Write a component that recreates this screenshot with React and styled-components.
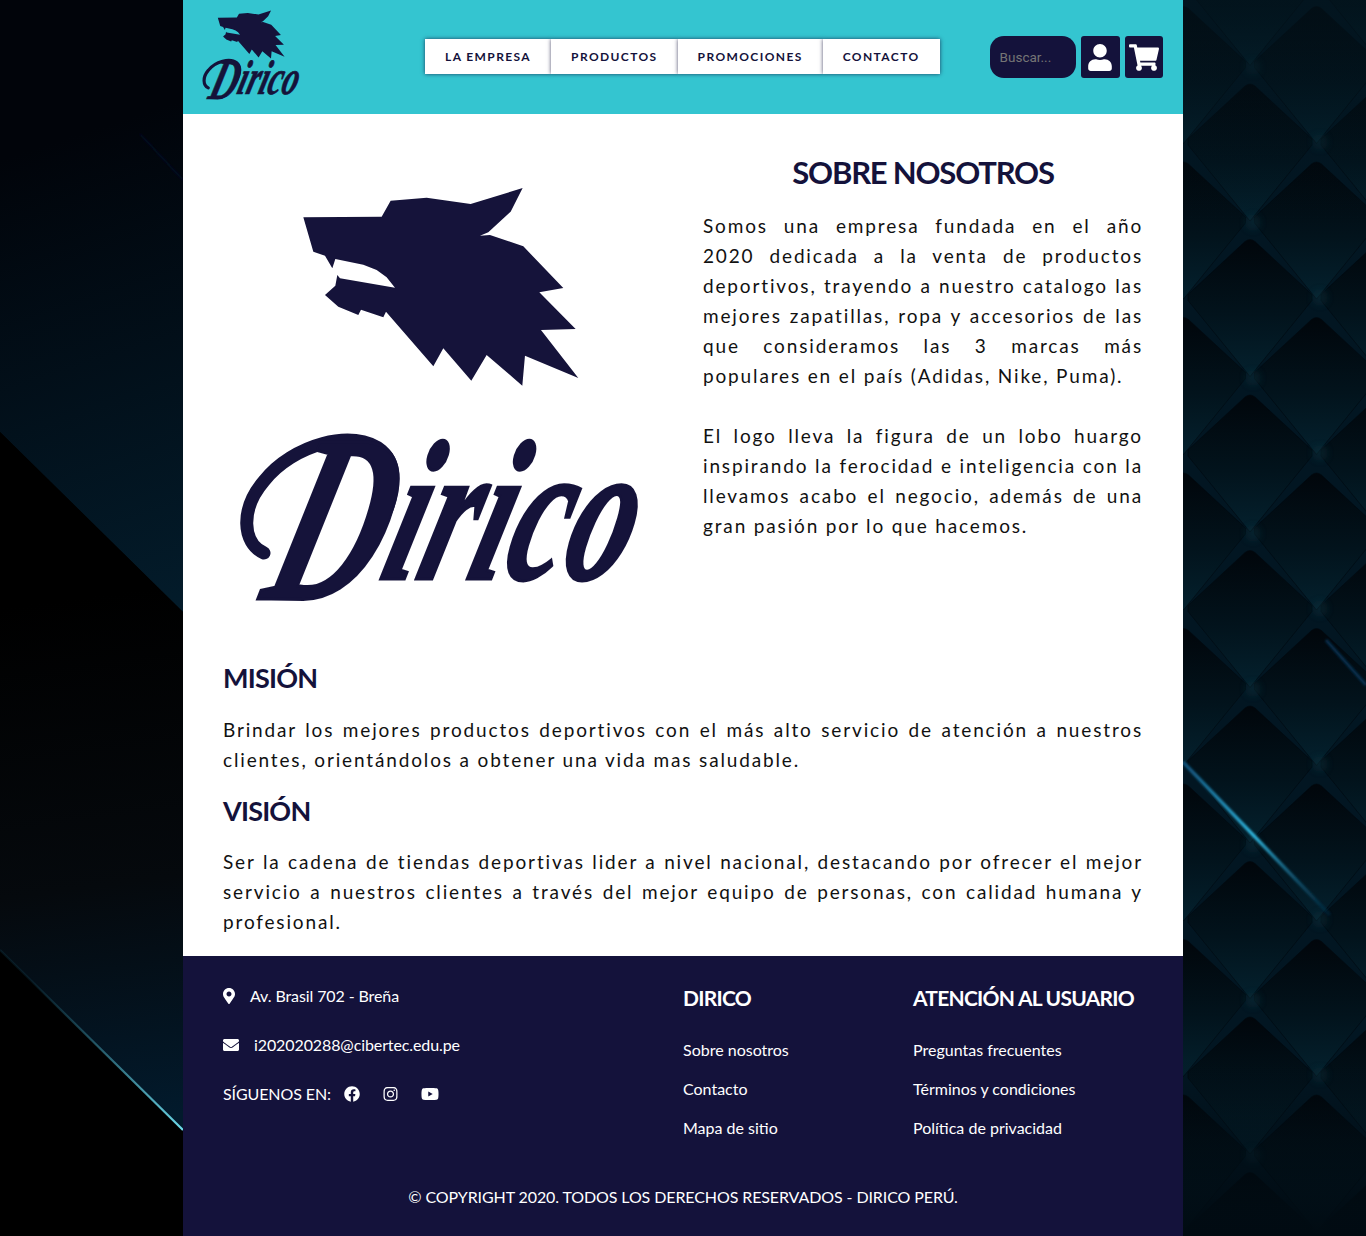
import React from "react";
import styled, { createGlobalStyle } from "styled-components";
import { FaUser, FaShoppingCart, FaMapMarkerAlt, FaEnvelope, FaFacebook, FaInstagram, FaYoutube } from "react-icons/fa";

const NAVY = "#14123b";

const GlobalStyle = createGlobalStyle`
  html { background: #000; }
  body { margin: 0; padding: 0; font-family: "Lato", "Liberation Sans", sans-serif; }
  * { box-sizing: border-box; }
`;

const BackdropSvg = styled.svg`
  position: fixed;
  inset: 0;
  z-index: -1;
  width: 1366px;
  height: 1236px;
  display: block;
`;

const Page = styled.div`
  width: 1000px;
  margin: 0 auto;
  background: #fff;
`;

const Header = styled.header`
  height: 114px;
  background: #34c5d0;
  display: flex;
  align-items: center;
  padding: 0 20px 0 17px;
`;

const LogoSvg = styled.svg`
  display: block;
  flex: none;
  overflow: visible;
  width: ${(p) => p.$w}px;
  height: ${(p) => p.$h}px;
  margin-bottom: ${(p) => p.$drop || 0}px;
`;

const Nav = styled.nav`
  display: flex;
  flex: none;
  margin: 0 0 1px 123px;
`;

const NavItem = styled.a`
  height: 35px;
  padding: 0 20px;
  display: flex;
  align-items: center;
  background: #fff;
  color: ${NAVY};
  font-size: 12px;
  font-weight: 700;
  letter-spacing: 1.4px;
  white-space: nowrap;
  box-shadow: 0 0 4px rgba(19, 19, 60, 0.75);
`;

const Search = styled.input`
  flex: none;
  width: 86px;
  height: 42px;
  margin-left: 50px;
  padding: 0 10px;
  border: 0;
  border-radius: 14px;
  background: ${NAVY};
  font: 13.5px "Roboto", sans-serif;
  color: #fff;
  &::placeholder { color: #757575; opacity: 1; }
`;

const IconButton = styled.button`
  flex: none;
  width: ${(p) => p.$w}px;
  height: 42px;
  margin-left: 5px;
  padding: 0;
  border: 0;
  border-radius: 3px;
  background: ${NAVY};
  color: #fff;
  display: flex;
  align-items: center;
  justify-content: center;
  svg { width: ${(p) => p.$icon}px; height: 27px; flex: none; }
`;

const Main = styled.main`
  padding: 39px 40px 19px 40px;
`;

const Intro = styled.section`
  display: grid;
  grid-template-columns: 440px 1fr;
  column-gap: 40px;
`;

const LogoCell = styled.div`
  padding: 16px 0 11px 7px;
`;

const Title = styled.h1`
  margin: 0 0 20px;
  font-size: 31px;
  line-height: 38px;
  font-weight: 700;
  letter-spacing: -1.2px;
  color: ${NAVY};
  text-align: center;
`;

const SubTitle = styled.h2`
  margin: ${(p) => p.$top}px 0 ${(p) => p.$bottom}px;
  font-size: 27px;
  line-height: 34px;
  font-weight: 700;
  letter-spacing: -0.8px;
  color: ${NAVY};
`;

const Paragraph = styled.p`
  margin: 0 0 ${(p) => p.$after || 0}px;
  font-size: 19px;
  line-height: 30px;
  letter-spacing: 1.85px;
  color: #111;
  text-align: justify;
`;

const Footer = styled.footer`
  background: ${NAVY};
  color: #fff;
  padding: 27px 40px;
  font-size: 16px;
  line-height: 24px;
`;

const FooterGrid = styled.div`
  display: grid;
  grid-template-columns: 460px 230px 1fr;
`;

const ContactColumn = styled.div`
  padding-top: 1px;
  display: flex;
  flex-direction: column;
  gap: 25px;
  letter-spacing: -0.1px;
`;

const ContactRow = styled.div`
  display: flex;
  align-items: center;
  height: 24px;
`;

const ContactIcon = styled.span`
  display: flex;
  margin-right: 15px;
  svg { width: ${(p) => p.$w}px; height: 16px; flex: none; }
`;

const SocialLabel = styled.span`
  margin-right: 13px;
`;

const SocialIcon = styled.span`
  display: flex;
  margin-right: 23px;
  svg { width: ${(p) => p.$w}px; height: 16px; flex: none; }
`;

const LinkColumn = styled.div`
  display: flex;
  flex-direction: column;
  gap: 15px;
`;

const FooterHeading = styled.h3`
  margin: 0 0 10px;
  font-size: 21px;
  line-height: 30px;
  font-weight: 700;
  letter-spacing: -0.75px;
`;

const FooterLink = styled.a`
  color: #fff;
`;

const Copyright = styled.p`
  margin: 45px 0 0;
  text-align: center;
  letter-spacing: -0.1px;
`;

const wolf = "220,145 455,143 482,95 590,86 722,105 878,57 842,128 775,190 750,200 780,198 880,232 1000,357 928,370 1037,480 933,483 1045,627 885,560 877,650 770,558 724,635 640,538 610,592 468,428 460,445 393,422 385,438 325,413 285,378 316,350 322,318 330,328 495,356 470,325 440,303 400,287 316,270 307,298 285,260 250,248";

function Logo({ w, compact }) {
  const vh = compact ? 405 : 450;
  const shift = compact ? -47 : 0;
  return (
    <LogoSvg $w={w} $h={(w * vh) / 420} $drop={compact ? 4 : 0} viewBox={`0 0 420 ${vh}`} fill="#15133a">
      <polygon points={wolf} transform="scale(0.3333)" />
      <g transform={`translate(0 ${shift})`}>
        <path
          d="M34 384 C12 374 10 340 34 312 C62 276 124 258 152 282 C172 300 164 340 136 376"
          fill="none"
          stroke="#15133a"
          strokeWidth="13"
          strokeLinecap="round"
        />
        <text
          transform="translate(34 410) skewX(-16) scale(0.65 1)"
          fontFamily="'Liberation Serif', serif"
          fontStyle="italic"
          fontWeight="700"
          fontSize="200"
          stroke="#15133a"
          strokeWidth="3"
        >
          <tspan fontSize="240" dy="20">D</tspan>
          <tspan dy="-20">irico</tspan>
        </text>
      </g>
    </LogoSvg>
  );
}

function Backdrop() {
  const scales = [];
  for (let row = -1; row < 9; row++) {
    for (let col = 0; col < 11; col++) {
      const odd = col % 2;
      const x = 1250 - 66.5 * 2 + 66.5 * col;
      const y = 83 + 155.5 * row + (odd ? 78 : 0);
      scales.push(
        <path
          key={row + "-" + col}
          d={`M${x - 5} ${y + 3} Q${x} ${y - 1} ${x + 5} ${y + 3} L${x + 62} ${y + 56} L${x + 62} ${y + 62} L${x} ${y + 138} L${x - 62} ${y + 62} L${x - 62} ${y + 56} Z`}
          fill="url(#scale)"
          stroke="#01090f"
          strokeOpacity="0.6"
          strokeWidth="1"
        />
      );
    }
  }
  return (
    <BackdropSvg viewBox="0 0 1366 1236" aria-hidden="true">
      <defs>
        <linearGradient id="scale" x1="0" y1="0" x2="0" y2="1">
          <stop offset="0" stopColor="#01060b" />
          <stop offset="0.55" stopColor="#02131c" />
          <stop offset="1" stopColor="#04212e" />
        </linearGradient>
        <linearGradient id="leftTop" gradientUnits="userSpaceOnUse" x1="30" y1="150" x2="183" y2="612">
          <stop offset="0" stopColor="#01040a" />
          <stop offset="1" stopColor="#031c2b" />
        </linearGradient>
        <linearGradient id="leftMid" gradientUnits="userSpaceOnUse" x1="60" y1="600" x2="130" y2="1120">
          <stop offset="0" stopColor="#000" />
          <stop offset="0.55" stopColor="#05090d" />
          <stop offset="1" stopColor="#021a2c" />
        </linearGradient>
        <linearGradient id="fade" x1="0" y1="0" x2="0" y2="1">
          <stop offset="0" stopColor="#010b12" stopOpacity="0" />
          <stop offset="1" stopColor="#010b12" stopOpacity="1" />
        </linearGradient>
        <linearGradient id="topFade" x1="0" y1="0" x2="0" y2="1">
          <stop offset="0" stopColor="#03141d" stopOpacity="0.6" />
          <stop offset="1" stopColor="#03141d" stopOpacity="0" />
        </linearGradient>
        <linearGradient id="edgeGlow" gradientUnits="userSpaceOnUse" x1="30" y1="980" x2="183" y2="1130">
          <stop offset="0" stopColor="#1b5f78" stopOpacity="0.2" />
          <stop offset="1" stopColor="#6fdcec" />
        </linearGradient>
        <linearGradient id="streak" gradientUnits="userSpaceOnUse" x1="1183" y1="762" x2="1330" y2="915">
          <stop offset="0" stopColor="#0f4f78" />
          <stop offset="0.48" stopColor="#2fb4dc" />
          <stop offset="1" stopColor="#073a5c" stopOpacity="0.3" />
        </linearGradient>
        <filter id="soft"><feGaussianBlur stdDeviation="0.9" /></filter>
        <filter id="knotBlur"><feGaussianBlur stdDeviation="3" /></filter>
      </defs>
      <rect x="1183" y="0" width="183" height="1236" fill="#021622" />
      {scales}
      {[0, 1, 2, 3, 4, 5, 6, 7].map((i) => (
        <g key={i} filter="url(#knotBlur)" fill="#0a303c" opacity="0.4">
          <circle cx="1253" cy={67 + 155.5 * i} r="8" />
          <circle cx="1320" cy={142 + 155.5 * i} r="8" />
        </g>
      ))}
      <rect x="1183" y="0" width="183" height="220" fill="url(#topFade)" />
      <rect x="1183" y="1060" width="183" height="176" fill="url(#fade)" />
      <line x1="1183" y1="762" x2="1330" y2="915" stroke="url(#streak)" strokeWidth="3.4" filter="url(#soft)" />
      <line x1="1326" y1="640" x2="1366" y2="685" stroke="#0c4a78" strokeOpacity="0.6" strokeWidth="3" filter="url(#soft)" />

      <rect x="0" y="0" width="183" height="1236" fill="#000" />
      <polygon points="0,0 183,0 183,612 0,432" fill="url(#leftTop)" />
      <polygon points="0,432 183,612 183,1130 0,950" fill="url(#leftMid)" />
      <line x1="140" y1="134" x2="183" y2="180" stroke="#060e2c" strokeWidth="1.5" filter="url(#soft)" />
      <line x1="0" y1="950" x2="183" y2="1130" stroke="url(#edgeGlow)" strokeWidth="2.2" />
    </BackdropSvg>
  );
}

export default function App() {
  return (
    <>
      <GlobalStyle />
      <Backdrop />
      <Page>
        <Header>
          <Logo w={102} compact />
          <Nav>
            <NavItem>LA EMPRESA</NavItem>
            <NavItem>PRODUCTOS</NavItem>
            <NavItem>PROMOCIONES</NavItem>
            <NavItem>CONTACTO</NavItem>
          </Nav>
          <Search placeholder="Buscar..." />
          <IconButton $w={39} $icon={24} aria-label="Usuario"><FaUser /></IconButton>
          <IconButton $w={38} $icon={30} aria-label="Carrito"><FaShoppingCart /></IconButton>
        </Header>
        <Main>
          <Intro>
            <LogoCell><Logo w={420} /></LogoCell>
            <div>
              <Title>SOBRE NOSOTROS</Title>
              <Paragraph $after={30}>
                Somos una empresa fundada en el año 2020 dedicada a la venta de productos deportivos, trayendo a nuestro catalogo las mejores zapatillas, ropa y accesorios de las que consideramos las 3 marcas más populares en el país (Adidas, Nike, Puma).
              </Paragraph>
              <Paragraph>
                El logo lleva la figura de un lobo huargo inspirando la ferocidad e inteligencia con la llevamos acabo el negocio, además de una gran pasión por lo que hacemos.
              </Paragraph>
            </div>
          </Intro>
          <SubTitle $top={31} $bottom={20}>MISIÓN</SubTitle>
          <Paragraph>
            Brindar los mejores productos deportivos con el más alto servicio de atención a nuestros clientes, orientándolos a obtener una vida mas saludable.
          </Paragraph>
          <SubTitle $top={19} $bottom={19}>VISIÓN</SubTitle>
          <Paragraph>
            Ser la cadena de tiendas deportivas lider a nivel nacional, destacando por ofrecer el mejor servicio a nuestros clientes a través del mejor equipo de personas, con calidad humana y profesional.
          </Paragraph>
        </Main>
        <Footer>
          <FooterGrid>
            <ContactColumn>
              <ContactRow><ContactIcon $w={12}><FaMapMarkerAlt /></ContactIcon>Av. Brasil 702 - Breña</ContactRow>
              <ContactRow><ContactIcon $w={16}><FaEnvelope /></ContactIcon>i202020288@cibertec.edu.pe</ContactRow>
              <ContactRow>
                <SocialLabel>SÍGUENOS EN:</SocialLabel>
                <SocialIcon $w={16}><FaFacebook /></SocialIcon>
                <SocialIcon $w={15}><FaInstagram /></SocialIcon>
                <SocialIcon $w={18}><FaYoutube /></SocialIcon>
              </ContactRow>
            </ContactColumn>
            <LinkColumn>
              <FooterHeading>DIRICO</FooterHeading>
              <FooterLink>Sobre nosotros</FooterLink>
              <FooterLink>Contacto</FooterLink>
              <FooterLink>Mapa de sitio</FooterLink>
            </LinkColumn>
            <LinkColumn>
              <FooterHeading>ATENCIÓN AL USUARIO</FooterHeading>
              <FooterLink>Preguntas frecuentes</FooterLink>
              <FooterLink>Términos y condiciones</FooterLink>
              <FooterLink>Política de privacidad</FooterLink>
            </LinkColumn>
          </FooterGrid>
          <Copyright>© COPYRIGHT 2020. TODOS LOS DERECHOS RESERVADOS - DIRICO PERÚ.</Copyright>
        </Footer>
      </Page>
    </>
  );
}
